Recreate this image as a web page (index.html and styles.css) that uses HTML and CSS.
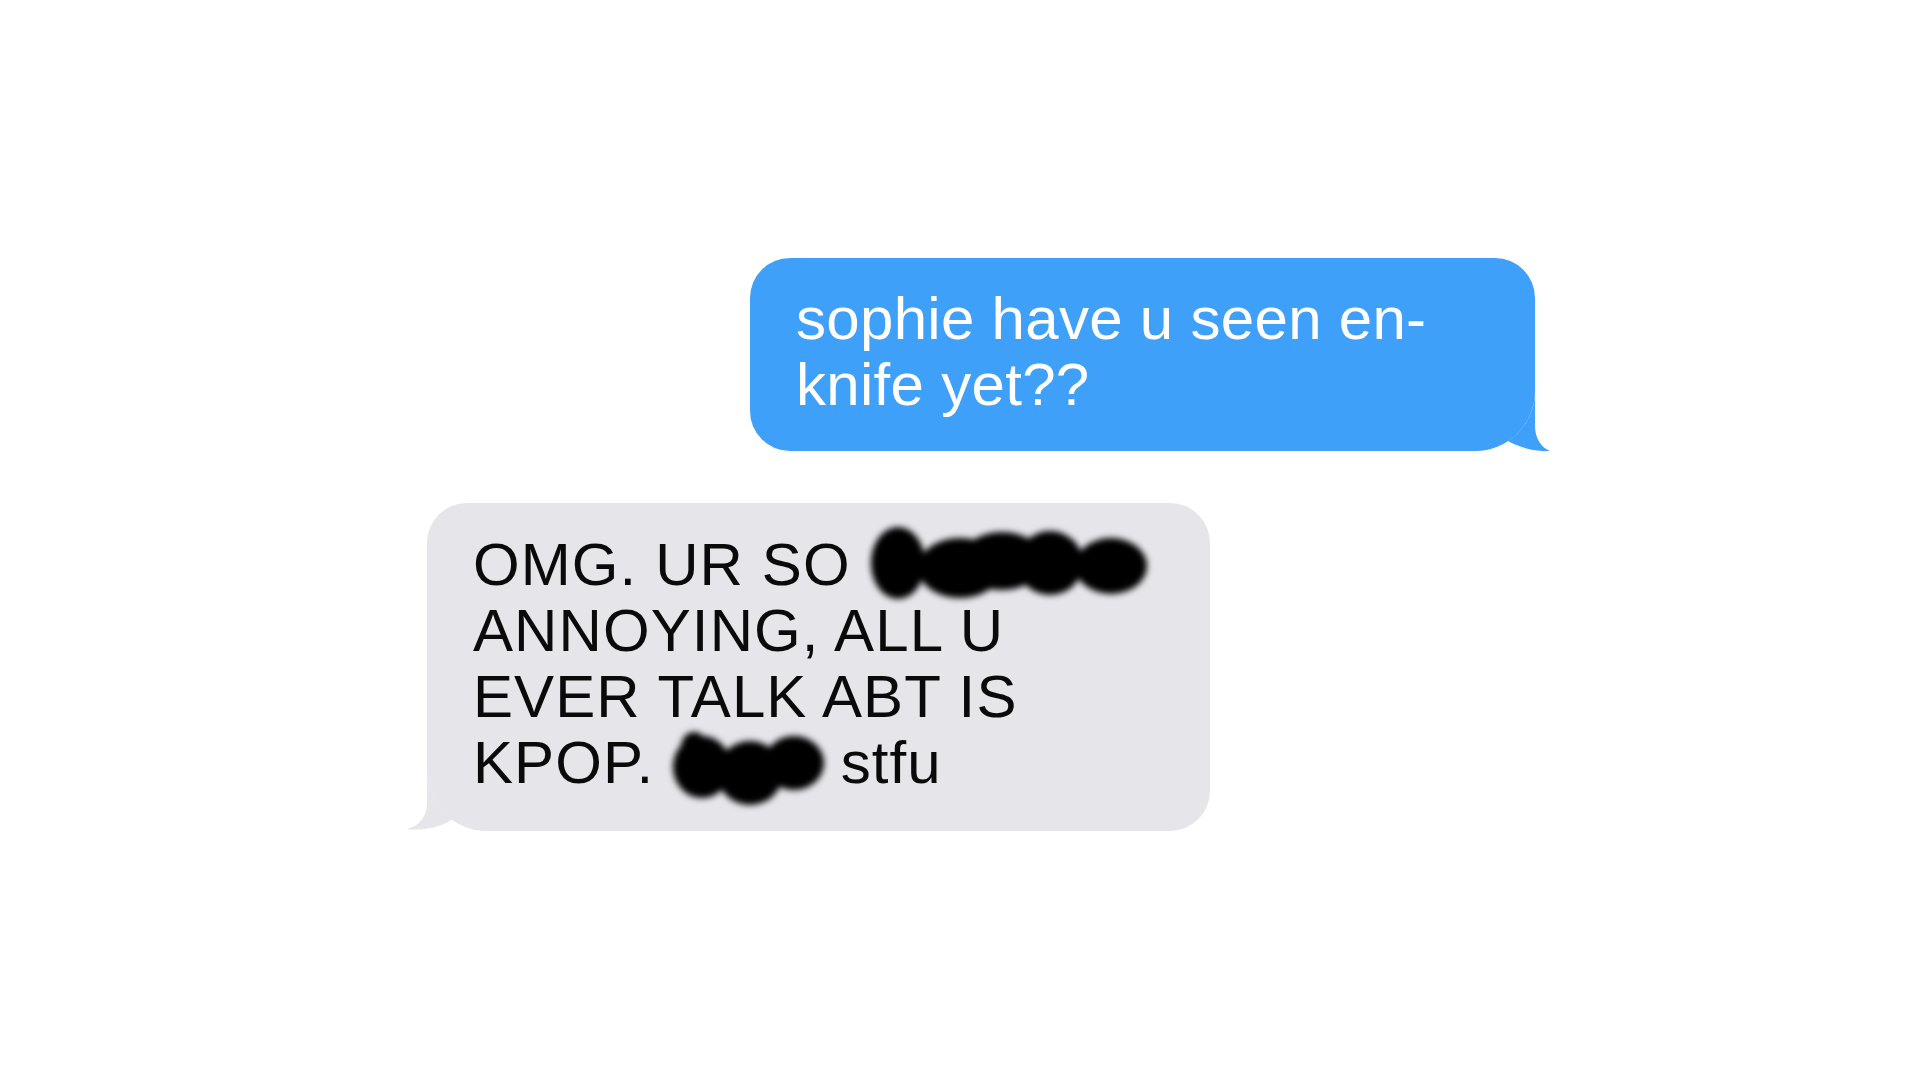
FILE: index.html
```html
<!DOCTYPE html>
<html lang="en">
<head>
<meta charset="utf-8">
<title>Messages</title>
<link rel="stylesheet" href="styles.css">
</head>
<body>
<main class="thread">
  <div class="bubble sent">
    <p class="text">sophie have u seen en-<br>knife yet??</p>
    <svg class="tail tail-sent" width="75" height="60" viewBox="0 0 75 60" aria-hidden="true">
      <path d="M60,0 V35 C60,48 67,57 75,60 C63,61 45,57 33,50.1 A60 60 0 0 0 60 0 Z" fill="#3ea0f9"/>
    </svg>
  </div>
  <div class="bubble received">
    <p class="text">OMG. UR SO <svg class="redact r1" width="276" height="44" viewBox="0 0 276 44" aria-label="redacted">
        <defs><filter id="blur1" x="-20%" y="-40%" width="140%" height="180%"><feGaussianBlur stdDeviation="3"/></filter></defs>
        <g filter="url(#blur1)" fill="#000">
          <ellipse cx="30" cy="22" rx="27" ry="36"/>
          <ellipse cx="92" cy="27" rx="42" ry="30"/>
          <ellipse cx="134" cy="20" rx="42" ry="29"/>
          <ellipse cx="182" cy="22" rx="33" ry="32"/>
          <ellipse cx="243" cy="25" rx="36" ry="28"/>
        </g>
      </svg><br>ANNOYING, ALL U<br>EVER TALK ABT IS<br>KPOP. <svg class="redact r2" width="151" height="44" viewBox="0 0 151 44" aria-label="redacted">
        <defs><filter id="blur2" x="-20%" y="-40%" width="140%" height="180%"><feGaussianBlur stdDeviation="3"/></filter></defs>
        <g filter="url(#blur2)" fill="#000">
          <ellipse cx="22" cy="8" rx="13" ry="15"/>
          <ellipse cx="30" cy="28" rx="29" ry="31"/>
          <ellipse cx="78" cy="34" rx="33" ry="32"/>
          <ellipse cx="122" cy="24" rx="30" ry="27"/>
        </g>
      </svg> stfu</p>
    <svg class="tail tail-received" width="80" height="60" viewBox="0 0 80 60" aria-hidden="true">
      <path d="M20,0 V32 C20,46 12,55 0,58 C14,60 32,57 45,48.7 A60 60 0 0 1 20 0 Z" fill="#e5e5ea"/>
    </svg>
  </div>
</main>
</body>
</html>
```
FILE: styles.css
```css
html, body {
  margin: 0;
  padding: 0;
  background: #ffffff;
}

.thread {
  width: 1920px;
  height: 1080px;
  box-sizing: border-box;
  padding: 258px 0 0 427px;
  display: flex;
  flex-direction: column;
  align-items: flex-start;
  gap: 52px;
  font-family: "Liberation Sans", Arial, Helvetica, sans-serif;
}

.bubble {
  position: relative;
  box-sizing: border-box;
  border-radius: 40px;
}

.text {
  margin: 0;
  font-size: 60px;
  line-height: 66px;
  white-space: nowrap;
}

.sent {
  margin-left: 323px;
  width: 785px;
  height: 193px;
  padding: 28px 46px 33px 46px;
  background: #3ea0f9;
  color: #ffffff;
  border-bottom-right-radius: 60px;
}

.sent .text {
  letter-spacing: 0.3px;
}

.received {
  width: 783px;
  height: 328px;
  padding: 29px 46px 35px 46px;
  background: #e5e5ea;
  color: #0a0a0a;
  border-bottom-left-radius: 60px;
}

.received .text {
  letter-spacing: 1.1px;
}

.tail {
  position: absolute;
  bottom: 0;
  display: block;
}

.tail-sent {
  right: -15px;
}

.tail-received {
  left: -20px;
}

.redact {
  display: inline-block;
  vertical-align: baseline;
  overflow: visible;
}
```
